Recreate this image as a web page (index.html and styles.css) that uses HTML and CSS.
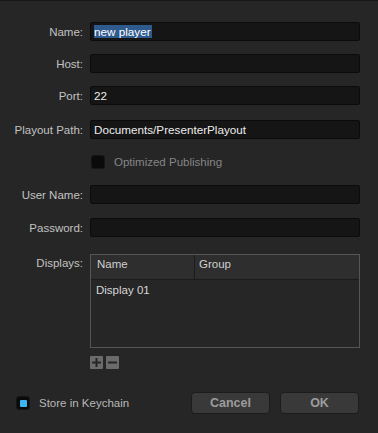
FILE: index.html
```html
<!DOCTYPE html>
<html lang="en">

<head>
    <meta charset="UTF-8">
    <meta name="viewport" content="width=device-width, initial-scale=1.0">
    <title>New Player</title>
    <link rel="stylesheet" href="styles.css">
</head>

<body>
    <div class="sheet">
        <!-- Connection Fields -->
        <div class="form-row row-name">
            <label class="form-label">Name:</label>
            <div class="text-field"><span class="selected">new player</span></div>
        </div>
        <div class="form-row row-host">
            <label class="form-label">Host:</label>
            <div class="text-field"></div>
        </div>
        <div class="form-row row-port">
            <label class="form-label">Port:</label>
            <div class="text-field">22</div>
        </div>
        <div class="form-row row-path">
            <label class="form-label">Playout Path:</label>
            <div class="text-field">Documents/PresenterPlayout</div>
        </div>

        <!-- Optimized Publishing (disabled) -->
        <div class="form-row row-check">
            <span class="form-label"></span>
            <div class="check-item disabled">
                <span class="check-box"></span>
                <span>Optimized Publishing</span>
            </div>
        </div>

        <!-- Credentials -->
        <div class="form-row row-user">
            <label class="form-label">User Name:</label>
            <div class="text-field"></div>
        </div>
        <div class="form-row row-pass">
            <label class="form-label">Password:</label>
            <div class="text-field"></div>
        </div>

        <!-- Displays Table -->
        <div class="form-row row-displays">
            <label class="form-label">Displays:</label>
            <div class="table-wrap">
                <div class="table-head">
                    <div class="col col-name">Name</div>
                    <div class="col col-group">Group</div>
                </div>
                <div class="table-body">
                    <div class="table-row">Display 01</div>
                </div>
            </div>
        </div>
        <div class="form-row row-tools">
            <span class="form-label"></span>
            <div class="tool-buttons">
                <span class="tool-btn">
                    <svg width="9" height="9" viewBox="0 0 9 9"><path d="M3.5 0h2v3.5H9v2H5.5V9h-2V5.5H0v-2h3.5z" fill="#262626"/></svg>
                </span>
                <span class="tool-btn">
                    <svg width="9" height="9" viewBox="0 0 9 9"><rect x="0" y="3.5" width="9" height="2" fill="#262626"/></svg>
                </span>
            </div>
        </div>

        <!-- Footer -->
        <div class="footer">
            <div class="check-item keychain">
                <span class="check-box checked"></span>
                <span>Store in Keychain</span>
            </div>
            <div class="footer-buttons">
                <button class="push-btn">Cancel</button>
                <button class="push-btn">OK</button>
            </div>
        </div>
    </div>
</body>

</html>
```

FILE: styles.css
```css
/* Global Reset */
* {
    margin: 0;
    padding: 0;
    box-sizing: border-box;
}

html,
body {
    width: 378px;
    height: 433px;
    background: #262626;
    overflow: hidden;
}

body {
    font-family: "Liberation Sans", Arial, sans-serif;
    font-size: 11.5px;
    color: #c4c4c4;
}

/* Window Sheet */
.sheet {
    height: 433px;
    border-top: 1px solid #161616;
    padding-top: 21px;
    display: flex;
    flex-direction: column;
}

.form-row {
    display: flex;
    align-items: center;
    gap: 7px;
}

.form-label {
    width: 83px;
    flex-shrink: 0;
    text-align: right;
    color: #c2c2c2;
}

.row-host,
.row-port {
    margin-top: 13px;
}

.row-path {
    margin-top: 15px;
}

.row-check {
    margin-top: 16px;
}

.row-user {
    margin-top: 16px;
}

.row-pass {
    margin-top: 14px;
}

.row-displays {
    margin-top: 17px;
    align-items: flex-start;
}

.row-displays .form-label {
    line-height: 14px;
    padding-top: 2px;
}

.row-tools {
    margin-top: 8px;
}

/* Text Fields */
.text-field {
    width: 270px;
    height: 19px;
    background: #151515;
    border: 1px solid #0b0b0b;
    border-radius: 2px;
    color: #ececec;
    font-size: 11.7px;
    line-height: 17px;
    padding-left: 3px;
    white-space: nowrap;
}

.selected {
    display: inline-block;
    background: #2f5a8e;
    color: #ffffff;
    line-height: 13px;
    padding: 0 1px 0 0;
}

/* Checkboxes */
.check-item {
    display: flex;
    align-items: center;
    gap: 9px;
}

.check-item.disabled {
    color: #858585;
    padding-left: 1px;
}

.check-box {
    width: 14px;
    height: 14px;
    background: #0a0a0a;
    border: 1px solid #161616;
    border-radius: 3px;
    display: flex;
    align-items: center;
    justify-content: center;
}

.check-box.checked::after {
    content: '';
    width: 7px;
    height: 7px;
    border-radius: 1px;
    background: #3cb4f4;
}

/* Displays Table */
.table-wrap {
    width: 270px;
    height: 94px;
    border: 1px solid #555555;
}

.table-head {
    display: flex;
    height: 25px;
    background: #2e2e2e;
    border-bottom: 1px solid #1b1b1b;
}

.col {
    line-height: 18px;
    padding-left: 6px;
    color: #d0d0d0;
}

.col-name {
    width: 104px;
    border-right: 1px solid #1b1b1b;
}

.col-group {
    flex: 1;
    padding-left: 4px;
}

.table-row {
    padding: 3px 0 0 5px;
    color: #d6d6d6;
    line-height: 14px;
}

/* Add / Remove Buttons */
.tool-buttons {
    display: flex;
    gap: 3px;
}

.tool-btn {
    width: 13px;
    height: 13px;
    background: #6b6b6b;
    border-radius: 1px;
    display: flex;
    align-items: center;
    justify-content: center;
}

/* Footer */
.footer {
    margin-top: 23px;
    display: flex;
    align-items: center;
    justify-content: space-between;
    padding: 0 19px 0 16px;
}

.keychain {
    color: #b8b8b8;
}

.footer-buttons {
    display: flex;
    gap: 10px;
}

.push-btn {
    width: 79px;
    height: 22px;
    background: #393939;
    border: 1px solid #1c1c1c;
    border-radius: 4px;
    font-family: "Liberation Sans", Arial, sans-serif;
    font-size: 12.5px;
    font-weight: bold;
    color: #9c9c9c;
}
```
